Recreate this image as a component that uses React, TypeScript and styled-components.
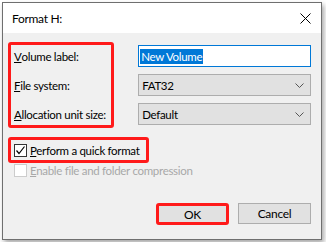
import React from 'react';
import styled, { createGlobalStyle } from 'styled-components';

const GlobalStyle = createGlobalStyle`
  html, body {
    margin: 0;
    padding: 0;
    background: #ffffff;
  }
  body {
    font-family: Lato, "Liberation Sans", Arial, sans-serif;
    font-size: 11.5px;
    letter-spacing: -0.3px;
    color: #000000;
  }
`;

const Window = styled.div`
  margin: 2px;
  width: 318px;
  height: 236px;
  border: 1px solid #6f6f6f;
  box-shadow: 2px 3px 5px rgba(0, 0, 0, 0.35);
  background: #f0f0f0;
  display: flex;
  flex-direction: column;
`;

const TitleBar = styled.div`
  height: 30px;
  background: #ffffff;
  display: flex;
  align-items: center;
  justify-content: space-between;
  padding: 0 10px 0 9px;
`;

const Title = styled.span`
  font-size: 12px;
  color: #000000;
`;

const Body = styled.div`
  flex: 1;
  padding: 9px 10px 0 5px;
  display: flex;
  flex-direction: column;
`;

const FormArea = styled.div`
  display: flex;
  align-items: flex-start;
`;

const Highlight = styled.div<{ $width?: number }>`
  border: 3px solid #ff1a1a;
  border-radius: 3px;
  ${(p) => (p.$width ? `width: ${p.$width}px;` : '')}
`;

const LabelList = styled.div`
  display: flex;
  flex-direction: column;
  gap: 7px;
  padding: 0 3px;
`;

const Label = styled.div`
  height: 22px;
  display: flex;
  align-items: center;
  white-space: nowrap;
`;

const Mnemonic = styled.span`
  text-decoration: underline;
`;

const FieldList = styled.div`
  margin-left: 24px;
  padding-top: 3px;
  width: 176px;
  display: flex;
  flex-direction: column;
  gap: 7px;
`;

const TextBox = styled.div`
  height: 22px;
  box-sizing: border-box;
  border: 1px solid #0078d7;
  background: #ffffff;
  display: flex;
  align-items: center;
  padding-left: 1px;
`;

const Selected = styled.span`
  background: #0078d7;
  color: #ffffff;
  padding: 0 1px;
  line-height: 15px;
`;

const Select = styled.div`
  height: 22px;
  box-sizing: border-box;
  border: 1px solid #adadad;
  background: #e1e1e1;
  display: flex;
  align-items: center;
  justify-content: space-between;
  padding: 0 6px 0 3px;
`;

const CheckArea = styled.div`
  margin-top: 9px;
  display: flex;
  flex-direction: column;
  align-items: flex-start;
`;

const CheckRow = styled.label<{ $disabled?: boolean }>`
  display: flex;
  align-items: center;
  gap: 3px;
  height: 20px;
  padding: 0 ${(p) => (p.$disabled ? 0 : 6)}px 0 3px;
  color: ${(p) => (p.$disabled ? '#a8a8a8' : '#000000')};
  ${(p) => (p.$disabled ? 'margin: -3px 0 0 3px;' : '')}
`;

const Box = styled.span<{ $disabled?: boolean }>`
  width: 13px;
  height: 13px;
  box-sizing: border-box;
  border: 1px solid ${(p) => (p.$disabled ? '#cccccc' : '#333333')};
  background: #ffffff;
  display: flex;
  align-items: center;
  justify-content: center;
`;

const ButtonRow = styled.div`
  margin-top: auto;
  margin-bottom: 14px;
  display: flex;
  justify-content: flex-end;
  gap: 9px;
`;

const Button = styled.button<{ $marked?: boolean }>`
  width: 73px;
  height: ${(p) => (p.$marked ? 22 : 21)}px;
  box-sizing: border-box;
  border: ${(p) => (p.$marked ? '3px solid #ff1a1a' : '1px solid #adadad')};
  border-radius: ${(p) => (p.$marked ? '3px' : '0')};
  background: #e1e1e1;
  font-family: inherit;
  font-size: 12px;
  letter-spacing: inherit;
  color: #000000;
  padding: 0;
`;

const Chevron = () => (
  <svg width="9" height="5" viewBox="0 0 9 5">
    <path d="M0.5 0.5 L4.5 4.5 L8.5 0.5" fill="none" stroke="#555" strokeWidth="1" />
  </svg>
);

const CloseIcon = () => (
  <svg width="11" height="11" viewBox="0 0 11 11">
    <path d="M0.5 0.5 L10.5 10.5 M10.5 0.5 L0.5 10.5" stroke="#000" strokeWidth="1" />
  </svg>
);

const Tick = () => (
  <svg width="11" height="11" viewBox="0 0 11 11">
    <path d="M1.5 5.5 L4 8.5 L9.5 1.5" fill="none" stroke="#000" strokeWidth="1.2" />
  </svg>
);

export default function App() {
  return (
    <>
      <GlobalStyle />
      <Window>
        <TitleBar>
          <Title>Format H:</Title>
          <CloseIcon />
        </TitleBar>
        <Body>
          <FormArea>
            <Highlight $width={102}>
              <LabelList>
                <Label>
                  <Mnemonic>V</Mnemonic>olume label:
                </Label>
                <Label>
                  <Mnemonic>F</Mnemonic>ile system:
                </Label>
                <Label>
                  <Mnemonic>A</Mnemonic>llocation unit size:
                </Label>
              </LabelList>
            </Highlight>
            <FieldList>
              <TextBox>
                <Selected>New Volume</Selected>
              </TextBox>
              <Select>
                <span>FAT32</span>
                <Chevron />
              </Select>
              <Select>
                <span>Default</span>
                <Chevron />
              </Select>
            </FieldList>
          </FormArea>
          <CheckArea>
            <Highlight>
              <CheckRow>
                <Box>
                  <Tick />
                </Box>
                <span>
                  <Mnemonic>P</Mnemonic>erform a quick format
                </span>
              </CheckRow>
            </Highlight>
            <CheckRow $disabled>
              <Box $disabled />
              <span>
                <Mnemonic>E</Mnemonic>nable file and folder compression
              </span>
            </CheckRow>
          </CheckArea>
          <ButtonRow>
            <Button $marked>OK</Button>
            <Button>Cancel</Button>
          </ButtonRow>
        </Body>
      </Window>
    </>
  );
}
